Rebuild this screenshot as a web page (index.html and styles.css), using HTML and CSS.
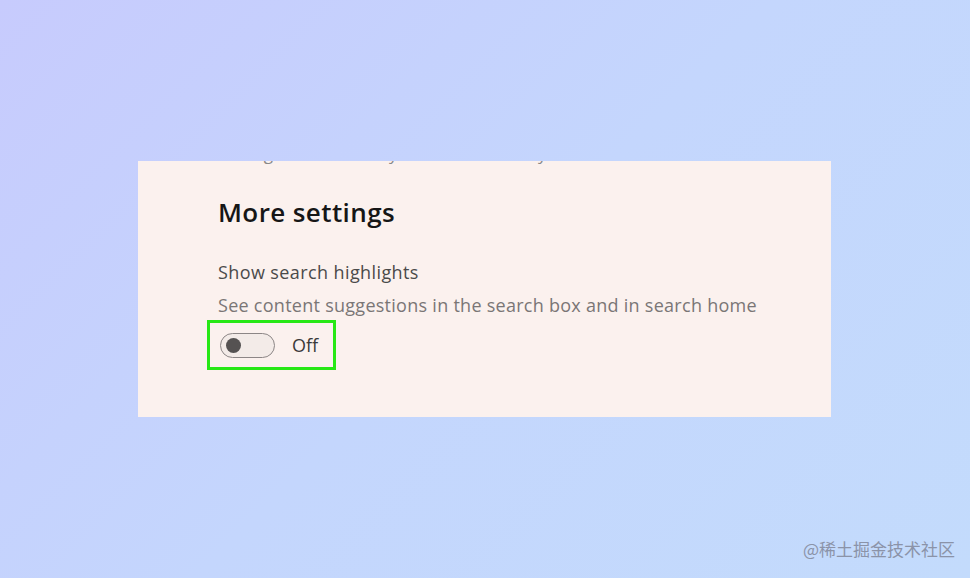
FILE: index.html
```html
<!DOCTYPE html>
<html lang="en">
<head>
    <meta charset="UTF-8">
    <meta name="viewport" content="width=device-width, initial-scale=1.0">
    <title>More settings</title>
    <link rel="stylesheet" href="styles.css">
</head>
<body>
    <div class="card">
        <div class="cut-line">Manage how we use your search history</div>
        <h2>More settings</h2>
        <div class="label">Show search highlights</div>
        <div class="desc">See content suggestions in the search box and in search home</div>
        <div class="highlight">
            <span class="toggle"><span class="knob"></span></span>
            <span class="state">Off</span>
        </div>
    </div>

    <div class="watermark">@稀土掘金技术社区</div>
</body>
</html>
```

FILE: styles.css
```css
body {
    margin: 0;
    width: 970px;
    height: 578px;
    background: linear-gradient(135deg, #c7cbfd 0%, #c4d6fd 50%, #c3dbfc 100%);
    font-family: "Open Sans", "Noto Sans", sans-serif;
    padding: 161px 0 0 138px;
    box-sizing: border-box;
    overflow: hidden;
}

.card {
    width: 693px;
    height: 256px;
    background-color: #fbf1ee;
    padding: 0 0 0 80px;
    box-sizing: border-box;
    overflow: hidden;
}

.cut-line {
    font-size: 17px;
    line-height: 20px;
    color: #888;
    margin-top: -17px;
    letter-spacing: 0.3px;
}

h2 {
    font-size: 26px;
    font-weight: 600;
    color: #161616;
    margin: 33px 0 0 0;
    line-height: 30px;
    letter-spacing: 0.4px;
}

.label {
    font-size: 18px;
    color: #4a4a4a;
    margin-top: 33px;
    line-height: 24px;
    letter-spacing: 0.4px;
}

.desc {
    font-size: 18px;
    color: #7a7676;
    margin-top: 9px;
    line-height: 24px;
    letter-spacing: 0.27px;
}

.highlight {
    display: inline-flex;
    align-items: center;
    margin: 3px 0 0 -11px;
    width: 129px;
    height: 50px;
    border: 3px solid #27e815;
    box-sizing: border-box;
    padding-left: 10px;
}

.toggle {
    width: 55px;
    height: 25px;
    border: 1.5px solid #8c8686;
    border-radius: 13px;
    box-sizing: border-box;
    background-color: #f3ebe8;
    display: flex;
    align-items: center;
    padding-left: 5px;
}

.knob {
    width: 15px;
    height: 15px;
    border-radius: 50%;
    background-color: #555252;
}

.state {
    font-size: 18px;
    color: #3a3a3a;
    margin-left: 17px;
}

.watermark {
    position: absolute;
    right: 15px;
    bottom: 17px;
    font-family: "Noto Sans CJK SC", sans-serif;
    font-size: 17px;
    color: #8b93a8;
}
```
